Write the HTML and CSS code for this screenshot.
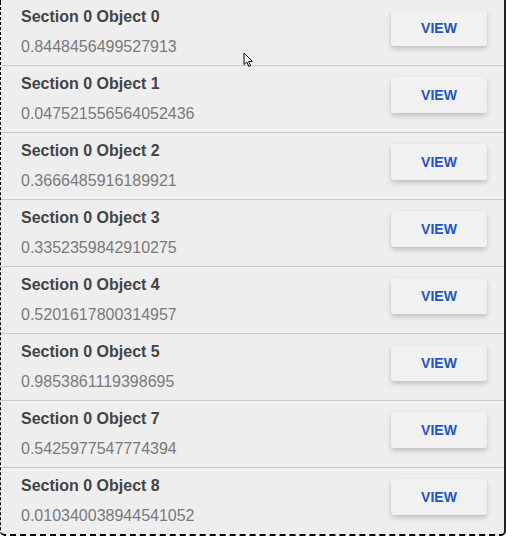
FILE: index.html
```html
<!DOCTYPE html>
<html>
<head>
<meta charset="utf-8">
<link rel="stylesheet" href="styles.css">
</head>
<body>
<div class="frame">
  <ul class="list">
    <li class="row"><div class="text"><div class="title">Section 0 Object 0</div><div class="value">0.8448456499527913</div></div><button class="view">VIEW</button></li>
    <li class="row"><div class="text"><div class="title">Section 0 Object 1</div><div class="value">0.047521556564052436</div></div><button class="view">VIEW</button></li>
    <li class="row"><div class="text"><div class="title">Section 0 Object 2</div><div class="value">0.3666485916189921</div></div><button class="view">VIEW</button></li>
    <li class="row"><div class="text"><div class="title">Section 0 Object 3</div><div class="value">0.3352359842910275</div></div><button class="view">VIEW</button></li>
    <li class="row"><div class="text"><div class="title">Section 0 Object 4</div><div class="value">0.5201617800314957</div></div><button class="view">VIEW</button></li>
    <li class="row"><div class="text"><div class="title">Section 0 Object 5</div><div class="value">0.9853861119398695</div></div><button class="view">VIEW</button></li>
    <li class="row"><div class="text"><div class="title">Section 0 Object 7</div><div class="value">0.5425977547774394</div></div><button class="view">VIEW</button></li>
    <li class="row last"><div class="text"><div class="title">Section 0 Object 8</div><div class="value">0.010340038944541052</div></div><button class="view">VIEW</button></li>
  </ul>
  <svg class="cursor" width="11" height="16" viewBox="0 0 11 16"><path d="M1 1 L1 12.5 L3.8 10 L5.8 14.5 L7.6 13.7 L5.6 9.3 L9.4 9.3 Z" fill="#fff" stroke="#000" stroke-width="1"/></svg>
</div>
</body>
</html>
```
FILE: styles.css
```css
html, body {
  margin: 0;
  padding: 0;
  background: #ffffff;
}
.frame {
  position: relative;
  width: 506px;
  height: 536px;
  box-sizing: border-box;
  background: #eeeeee;
  border-left: 1px dashed #000;
  border-bottom: 2px dashed #000;
  border-right: 2px solid #222;
  border-bottom-left-radius: 5px;
  border-bottom-right-radius: 5px;
  overflow: hidden;
  font-family: "Liberation Sans", Arial, Helvetica, sans-serif;
}
.list {
  list-style: none;
  margin: -1px 0 0 0;
  padding: 0;
}
.row {
  display: flex;
  justify-content: space-between;
  align-items: flex-start;
  height: 66px;
  border-bottom: 1px solid #c9c9c9;
  padding: 0 17px 0 20px;
}
.row.last {
  border-bottom: none;
}
.text {
  padding-top: 8px;
}
.title {
  font-size: 16px;
  font-weight: bold;
  color: #444444;
  line-height: 20px;
}
.value {
  font-size: 16px;
  color: #7a7a7a;
  line-height: 20px;
  margin-top: 10px;
}
.view {
  margin-top: 11px;
  width: 96px;
  height: 36px;
  border: none;
  border-radius: 3px;
  background: #f1f1f1;
  box-shadow: 0 3px 5px rgba(0, 0, 0, 0.18), 0 0 1px rgba(0, 0, 0, 0.08);
  color: #2453c5;
  font-family: "Liberation Sans", Arial, sans-serif;
  font-weight: bold;
  font-size: 14px;
  padding: 0;
  cursor: pointer;
}
.cursor {
  position: absolute;
  left: 242px;
  top: 52px;
}
```
